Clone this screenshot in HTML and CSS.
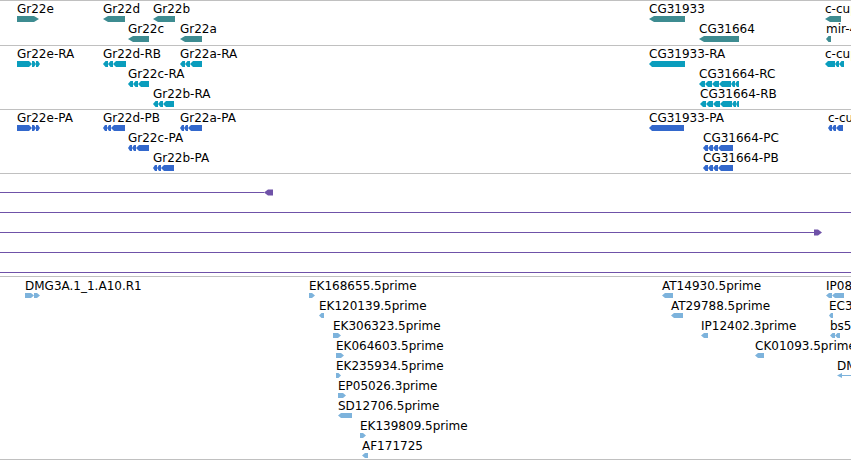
FILE: index.html
```html
<!DOCTYPE html>
<html lang="en">
<head>
  <meta charset="UTF-8">
  <title>Annotation tracks</title>
  <link rel="stylesheet" href="styles.css">
</head>
<body>
  <!-- one block per track, features are placed by coordinate -->
  <div class="track gene" id="gene"></div>
  <div class="track transcript" id="transcript"></div>
  <div class="track protein" id="protein"></div>

  <div class="track alignments">
    <div class="strand-row">
      <div class="strand" style="width:264px"></div>
      <svg class="head" width="9" height="7"><polygon points="0,3.5 4,0.5 9,0.5 9,6.5 4,6.5"/></svg>
    </div>
    <div class="strand-row"><div class="strand full"></div></div>
    <div class="strand-row">
      <div class="strand" style="width:814px"></div>
      <svg class="head" width="8" height="7"><polygon points="0,0.5 4,0.5 8,3.5 4,6.5 0,6.5"/></svg>
    </div>
    <div class="strand-row"><div class="strand full"></div></div>
    <div class="strand-row"><div class="strand full"></div></div>
  </div>

  <div class="track est" id="est"></div>

  <script>
    // [x, label, width, strand, segments, thin]
    const tracks = {
      gene: { h: 6, tip: 5, top: 1, rows: [
        [[17, 'Gr22e', 22, 'f'], [103, 'Gr22d', 22, 'r'], [153, 'Gr22b', 22, 'r'], [649, 'CG31933', 36, 'r'], [825, 'c-cup', 16, 'r']],
        [[128, 'Gr22c', 21, 'r'], [180, 'Gr22a', 22, 'r'], [699, 'CG31664', 40, 'r'], [826, 'mir-4916', 5, 'r']]
      ]},
      transcript: { h: 6, tip: 3, top: 1, rows: [
        [[17, 'Gr22e-RA', 23, 'f', [15, 4, 4]], [103, 'Gr22d-RB', 23, 'r', [5, 5, 13]], [180, 'Gr22a-RA', 22, 'r', [5, 5, 12]],
         [649, 'CG31933-RA', 36, 'r'], [825, 'c-cup-RA', 19, 'r', [10, 4, 5]]],
        [[128, 'Gr22c-RA', 21, 'r', [5, 5, 11]], [699, 'CG31664-RC', 40, 'r', [6, 7, 7, 12, 4, 4]]],
        [[153, 'Gr22b-RA', 21, 'r', [5, 5, 11]], [700, 'CG31664-RB', 39, 'r', [6, 7, 7, 12, 4, 3]]]
      ]},
      protein: { h: 6, tip: 3, top: 1, rows: [
        [[17, 'Gr22e-PA', 23, 'f', [15, 4, 4]], [103, 'Gr22d-PB', 22, 'r', [4, 4, 14]], [180, 'Gr22a-PA', 22, 'r', [4, 4, 14]],
         [649, 'CG31933-PA', 35, 'r'], [828, 'c-cup-PA', 15, 'r', [4, 4, 7]]],
        [[128, 'Gr22c-PA', 21, 'r', [4, 4, 13]], [703, 'CG31664-PC', 30, 'r', [5, 5, 5, 15]]],
        [[153, 'Gr22b-PA', 21, 'r', [4, 4, 13]], [703, 'CG31664-PB', 30, 'r', [5, 5, 5, 15]]]
      ]},
      est: { h: 5, tip: 3, top: 2, rows: [
        [[25, 'DMG3A.1_1.A10.R1', 15, 'f', [9, 6]], [309, 'EK168655.5prime', 6, 'f'], [662, 'AT14930.5prime', 11, 'r'], [826, 'IP08391.5prime', 18, 'r', [6, 12]]],
        [[319, 'EK120139.5prime', 5, 'r'], [671, 'AT29788.5prime', 12, 'r'], [829, 'EC302318.5prime', 4, 'r']],
        [[333, 'EK306323.5prime', 8, 'f'], [701, 'IP12402.3prime', 7, 'r'], [830, 'bs53f11.y1', 10, 'r', [5, 5]]],
        [[336, 'EK064603.5prime', 8, 'f'], [755, 'CK01093.5prime', 9, 'r']],
        [[336, 'EK235934.5prime', 5, 'f'], [837, 'DMG4C.1', 14, 'r', null, true]],
        [[338, 'EP05026.3prime', 8, 'f']],
        [[338, 'SD12706.5prime', 14, 'r']],
        [[360, 'EK139809.5prime', 6, 'f']],
        [[362, 'AF171725', 6, 'r']]
      ]}
    };

    function glyph(w, h, tip, dir, segs, thin) {
      const m = h / 2;
      let shapes = '';
      if (thin) {
        shapes = '<polygon points="0,' + m + ' 5,0 5,' + h + '"/>' +
                 '<rect x="5" y="' + (m - 0.5) + '" width="' + (w - 5) + '" height="1"/>';
      } else {
        let s = 0;
        (segs || [w]).forEach(len => {
          const e = s + len, t = Math.min(tip, len / 2);
          const p = dir === 'f'
            ? [[s, 0], [e - t, 0], [e, m], [e - t, h], [s, h]]
            : [[s, m], [s + t, 0], [e, 0], [e, h], [s + t, h]];
          shapes += '<polygon points="' + p.map(q => q.join(',')).join(' ') + '"/>';
          s = e;
        });
      }
      return '<svg width="' + w + '" height="' + h + '">' + shapes + '</svg>';
    }

    Object.keys(tracks).forEach(id => {
      const t = tracks[id];
      const el = document.getElementById(id);
      t.rows.forEach((row, i) => {
        row.forEach(f => {
          const div = document.createElement('div');
          div.className = 'feat';
          div.style.left = f[0] + 'px';
          div.style.top = (t.top + i * 20) + 'px';
          div.innerHTML = '<div class="label">' + f[1] + '</div>' + glyph(f[2], t.h, t.tip, f[3], f[4], f[5]);
          el.appendChild(div);
        });
      });
    });
  </script>
</body>
</html>
```
FILE: styles.css
```css
body {
  margin: 0;
  overflow: hidden;
  background: #fff;
  color: #000;
  font-family: "DejaVu Sans", sans-serif;
  font-size: 12px;
}
.track {
  position: relative;
  overflow: hidden;
  border-top: 1px solid #c0c0c0;
}
.track:last-of-type { border-bottom: 1px solid #c0c0c0; }
.gene { height: 44px; }
.transcript, .protein { height: 63px; }
.est { height: 182px; }

.feat {
  position: absolute;
  white-space: nowrap;
}
.feat .label { height: 14px; line-height: 14px; }
.feat svg { display: block; }
.gene svg { fill: #3e8c91; }
.transcript svg { fill: #0a9dbd; }
.protein svg { fill: #3368cc; }
.est svg { fill: #7db3dc; }

/* alignment strands */
.alignments {
  height: 103px;
  box-sizing: border-box;
  padding-top: 15px;
  display: flex;
  flex-direction: column;
  gap: 13px;
}
.strand-row {
  height: 7px;
  display: flex;
  align-items: center;
}
.strand { height: 1px; background: #6f52a8; }
.strand.full { flex: 1; }
.head { display: block; fill: #6f52a8; }
```
